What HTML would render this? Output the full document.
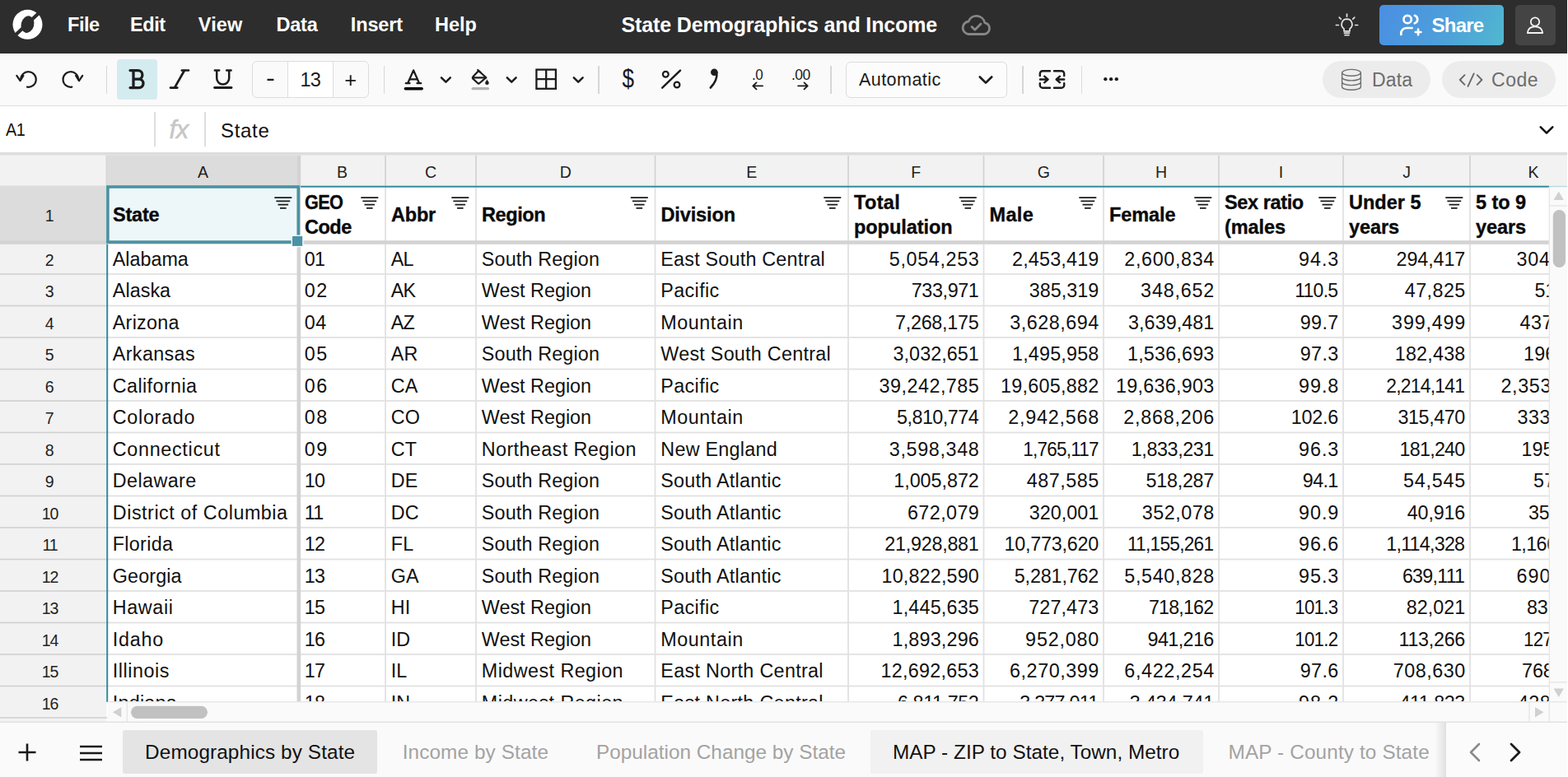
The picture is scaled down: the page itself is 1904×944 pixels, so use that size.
<!DOCTYPE html>
<html lang="en"><head><meta charset="utf-8"><title>State Demographics and Income</title>
<style>
*{box-sizing:border-box;margin:0;padding:0}
html,body{width:1904px;height:944px;overflow:hidden;background:#fff;font-family:"Liberation Sans",sans-serif;color:#111}
.abs{position:absolute}
#top{position:absolute;left:0;top:0;width:1903px;height:64.5px;background:#2d2d2d;z-index:3}
#tb{position:absolute;left:0;top:64px;width:1904px;height:65px;background:#fafafa;border-bottom:1.3px solid #dedede}
#fb{position:absolute;left:0;top:129px;width:1904px;height:56px;background:#fff}
#grid{position:absolute;left:0;top:185px;width:1904px;height:693px;background:#fff;overflow:hidden}
#bot{position:absolute;left:0;top:878px;width:1904px;height:66px;background:#fafafa}
.menu{position:absolute;top:0;height:64px;line-height:61.4px;color:#fff;font-weight:bold;font-size:23.5px;white-space:nowrap}
.sep{position:absolute;width:1.4px;background:#d6d6d6}
.t{position:absolute;white-space:nowrap}
.ic{position:absolute;overflow:visible}
.cell{position:absolute;white-space:nowrap;font-size:23.3px;height:38px;line-height:38px;color:#111}
.r{text-align:right}
.hd{position:absolute;white-space:nowrap;font-weight:bold;font-size:23.5px;color:#0a0a0a;-webkit-text-stroke:.35px #0a0a0a}
.ch{position:absolute;top:4px;height:37px;line-height:41px;text-align:center;font-size:19.5px;color:#222}
.rh{position:absolute;left:0;width:120px;text-align:center;font-size:19.5px;color:#222;letter-spacing:-.3px}
.vl{position:absolute;width:2px;background:#e3e3e3}
.hl{position:absolute;height:2px;background:#e3e3e3}
.tab{position:absolute;top:0;height:66px;line-height:71px;font-size:24.3px;white-space:nowrap}
</style></head>
<body>
<div id="top"><svg class="ic" style="left:0px;top:0px" width="64" height="64" viewBox="0 0 64 64">
<circle cx="33.5" cy="29.8" r="18" fill="#fff"/>
<ellipse cx="33.5" cy="29.6" rx="7.8" ry="10.4" fill="#2d2d2d" transform="rotate(14 33.5 29.6)"/>
<path d="M17.8 43.6 L48.6 14.4" stroke="#2d2d2d" stroke-width="4.2" fill="none"/>
</svg>
<div class="menu" style="left:82px;letter-spacing:-0.45px">File</div>
<div class="menu" style="left:158px;letter-spacing:-0.45px">Edit</div>
<div class="menu" style="left:240.8px;letter-spacing:0.1px">View</div>
<div class="menu" style="left:335.4px;letter-spacing:-0.2px">Data</div>
<div class="menu" style="left:425.8px;letter-spacing:-0.15px">Insert</div>
<div class="menu" style="left:528px;letter-spacing:0px">Help</div>
<div class="menu" style="left:754.5px;font-size:25px;letter-spacing:-.14px">State Demographics and Income</div>
<svg class="ic" style="left:1166px;top:15px" width="38" height="30" viewBox="0 0 38 30" fill="none" stroke="#868686" stroke-width="2.8" stroke-linecap="round" stroke-linejoin="round">
<path d="M10 26.5 H28.5 a7 7 0 0 0 1.2 -13.9 a10.2 10.2 0 0 0 -19.6 -1.6 a7.8 7.8 0 0 0 -0.1 15.5 z"/>
<path d="M14 17.5 l3.8 3.8 l7.2 -7.4"/>
</svg>
<svg class="ic" style="left:1620.3px;top:14.6px" width="31" height="31" viewBox="0 0 32 32" fill="none" stroke="#e2e2e2" stroke-width="1.8" stroke-linecap="round">
<path d="M16 8.5 a6.6 6.6 0 0 0 -3.6 12.1 v3 h7.2 v-3 a6.6 6.6 0 0 0 -3.6 -12.1 z" stroke-linejoin="round"/>
<path d="M12.8 26 h6.4 M13.5 28.6 h5"/>
<path d="M16 2.2 v3 M6.4 6.4 l2.1 2.1 M25.6 6.4 l-2.1 2.1 M2.5 16 h3 M26.5 16 h3"/>
</svg>
<div class="abs" style="left:1675px;top:6px;width:151px;height:49px;border-radius:5px;background:linear-gradient(115deg,#4a8fe2 0%,#4d9edb 50%,#51b8cf 100%)"></div>
<svg class="ic" style="left:1698px;top:16px" width="32" height="30" viewBox="0 0 32 30" fill="none" stroke="#fff" stroke-width="2.7" stroke-linecap="round" stroke-linejoin="round">
<circle cx="11.1" cy="7.5" r="4.7"/>
<path d="M3.300 26 v-1.500 a6.500 6.500 0 0 1 6.500 -6.500 h6.800"/>
<path d="M19.800 2.800 a5 5 0 0 1 0 9.500"/>
<path d="M24.100 19.700 v6.600 M20.800 23 h6.600"/>
</svg>
<div class="menu" style="left:1738.5px;font-size:24px;letter-spacing:-.75px">Share</div>
<div class="abs" style="left:1840px;top:6px;width:49px;height:49px;border-radius:5px;background:#444"></div>
<svg class="ic" style="left:1852px;top:18px" width="24" height="26" viewBox="0 0 24 26" fill="none" stroke="#f4f4f4" stroke-width="1.8" stroke-linejoin="round">
<circle cx="12" cy="8.5" r="5.2"/>
<path d="M2.8 22 c0.6 -5.600 4.400 -7.600 9.200 -7.600 s8.600 2 9.200 7.600 z"/>
</svg></div>
<div id="tb"><svg class="ic" style="left:0;top:0" width="1904" height="64" viewBox="0 64 1904 64" fill="none" stroke="#1c1c1c" stroke-width="2.2" stroke-linecap="round" stroke-linejoin="round"><path d="M25.2 96.6 A9.3 9.3 0 1 1 33 105.700"/><path d="M20.300 91.800 L24.500 98.200 L28.400 92"/></svg>
<svg class="ic" style="left:0;top:0" width="1904" height="64" viewBox="0 64 1904 64" fill="none" stroke="#1c1c1c" stroke-width="2.2" stroke-linecap="round" stroke-linejoin="round"><path d="M95.100 96.600 A9.300 9.300 0 1 0 87.300 105.700"/><path d="M100.200 91.800 L96 98.200 L92.100 92"/></svg>
<div class="sep" style="left:129px;top:15.500px;height:34px"></div>
<div class="abs" style="left:142px;top:8px;width:49px;height:49px;border-radius:4px;background:#d4ecf0"></div>
<svg class="ic" style="left:0;top:0" width="1904" height="64" viewBox="0 64 1904 64" fill="none" stroke="#1c1c1c" stroke-width="2.2" stroke-linecap="round" stroke-linejoin="round"><path d="M158 85.600 H167.600 a5.200 5.200 0 0 1 0 10.600 H162 M167.600 96.200 H168.800 a5.200 5.200 0 0 1 0 10.400 H158 M162 85.600 V106.600" stroke-width="3.250"/></svg>
<svg class="ic" style="left:0;top:0" width="1904" height="64" viewBox="0 64 1904 64" fill="none" stroke="#1c1c1c" stroke-width="2.2" stroke-linecap="round" stroke-linejoin="round"><path d="M220.800 85.500 H229 M207 106.600 H215.300 M224 85.500 L212 106.600" stroke-width="2.700"/></svg>
<svg class="ic" style="left:0;top:0" width="1904" height="64" viewBox="0 64 1904 64" fill="none" stroke="#1c1c1c" stroke-width="2.2" stroke-linecap="round" stroke-linejoin="round"><path d="M263.200 85.500 V95 a7.500 7.500 0 0 0 15 0 V85.500 M260.800 85.500 H266.200 M275.200 85.500 H280.600" stroke-width="2.500"/><path d="M260.600 106.500 H281" stroke-width="2.900"/></svg>
<div class="abs" style="left:306px;top:10px;width:142px;height:45px;border:1.3px solid #dddddd;border-radius:6px;background:#fafafa"></div>
<div class="abs" style="left:348.800px;top:11px;width:56.400px;height:43px;background:#fff;border-left:1.3px solid #dddddd;border-right:1.3px solid #dddddd"></div>
<div class="t" style="left:323px;top:13px;font-size:29px;line-height:36px;color:#1a1a1a;transform:scaleX(1.12);transform-origin:0 50%">-</div>
<div class="t" style="left:364.500px;top:14.500px;font-size:23.500px;line-height:36px;color:#1a1a1a;letter-spacing:-.9px">13</div>
<div class="t" style="left:418.200px;top:14.800px;font-size:25.500px;line-height:36px;color:#1a1a1a">+</div>
<div class="sep" style="left:466px;top:15.500px;height:34px"></div>
<svg class="ic" style="left:0;top:0" width="1904" height="64" viewBox="0 64 1904 64" fill="none" stroke="#1c1c1c" stroke-width="2.2" stroke-linecap="round" stroke-linejoin="round"><path d="M495.200 101 L502.100 85.400 L509 101 M497.500 96.300 H506.700 M492.800 101.200 H497.500 M506.500 101.200 H511.200" stroke-width="2.300"/><path d="M492.300 107.700 H512.200" stroke="#000" stroke-width="3.400"/></svg>
<svg class="ic" style="left:0;top:0" width="1904" height="64" viewBox="0 64 1904 64" fill="none" stroke="#1c1c1c" stroke-width="2.2" stroke-linecap="round" stroke-linejoin="round"><path d="M536.0 94.300 L541.4 99.700 L546.8 94.300" stroke-width="2.500"/></svg>
<svg class="ic" style="left:0;top:0" width="1904" height="64" viewBox="0 64 1904 64" fill="none" stroke="#1c1c1c" stroke-width="2.2" stroke-linecap="round" stroke-linejoin="round"><path d="M581.200 86 L590.300 94.200 L582.300 101 a1.600 1.600 0 0 1 -2.200 0 L574.300 95.600 a1.600 1.600 0 0 1 0 -2.300 z" stroke-width="2.200"/><path d="M574.300 94.400 H590"/><path d="M580.200 85 L583.500 88"/><path d="M591.400 97.200 c1.300 1.700 2 2.700 2 3.600 a2 2 0 0 1 -4 0 c0 -0.900 0.700 -1.900 2 -3.600 z" fill="#1c1c1c" stroke-width="0.600"/><path d="M574 107.700 H592.500" stroke="#b3b3b3" stroke-width="3.200"/></svg>
<svg class="ic" style="left:0;top:0" width="1904" height="64" viewBox="0 64 1904 64" fill="none" stroke="#1c1c1c" stroke-width="2.2" stroke-linecap="round" stroke-linejoin="round"><path d="M615.8 94.300 L621.2 99.700 L626.6 94.300" stroke-width="2.500"/></svg>
<svg class="ic" style="left:0;top:0" width="1904" height="64" viewBox="0 64 1904 64" fill="none" stroke="#1c1c1c" stroke-width="2.300" stroke-linecap="round" stroke-linejoin="round"><rect x="651.400" y="84.600" width="23.500" height="23.200" stroke-linejoin="miter"/><path d="M663.200 84.600 V107.800 M651.400 96.200 H674.900" stroke-linecap="butt"/></svg>
<svg class="ic" style="left:0;top:0" width="1904" height="64" viewBox="0 64 1904 64" fill="none" stroke="#1c1c1c" stroke-width="2.2" stroke-linecap="round" stroke-linejoin="round"><path d="M696.8 94.300 L702.2 99.700 L707.6 94.300" stroke-width="2.500"/></svg>
<div class="sep" style="left:726.300px;top:15.500px;height:34px"></div>
<div class="t" style="left:754.100px;top:14.600px;font-size:31px;line-height:34px;color:#1a1a1a;transform:scaleX(.84);transform-origin:50% 50%">$</div>
<svg class="ic" style="left:0;top:0" width="1904" height="64" viewBox="0 64 1904 64" fill="none" stroke="#1c1c1c" stroke-width="2.2" stroke-linecap="round" stroke-linejoin="round"><path d="M804.200 106.700 L826 85.700" stroke-width="2.500"/><circle cx="808.300" cy="90.300" r="3.400"/><circle cx="822" cy="103" r="3.400"/></svg>
<svg class="ic" style="left:0;top:0" width="1904" height="64" viewBox="0 64 1904 64" fill="none" stroke="#1c1c1c" stroke-width="2.2" stroke-linecap="round" stroke-linejoin="round"><circle cx="867.300" cy="87.800" r="4.300" fill="#1c1c1c" stroke="none"/><path d="M870.300 88 c0.800 7 -2.200 13 -7.500 18.500" stroke-width="2.600"/></svg>
<div class="t" style="left:913.200px;top:17.400px;font-size:18px;line-height:20px;color:#1a1a1a;letter-spacing:-.6px;transform:scaleX(.94);transform-origin:0 0">.0</div>
<svg class="ic" style="left:0;top:0" width="1904" height="64" viewBox="0 64 1904 64" fill="none" stroke="#1c1c1c" stroke-width="2.2" stroke-linecap="round" stroke-linejoin="round"><path d="M926 104.400 H914.500 M918.500 100.400 L914.300 104.400 L918.500 108.400" stroke-width="1.900"/></svg>
<div class="t" style="left:961.400px;top:17.400px;font-size:18px;line-height:20px;color:#1a1a1a;letter-spacing:-.6px;transform:scaleX(.97);transform-origin:0 0">.00</div>
<svg class="ic" style="left:0;top:0" width="1904" height="64" viewBox="0 64 1904 64" fill="none" stroke="#1c1c1c" stroke-width="2.2" stroke-linecap="round" stroke-linejoin="round"><path d="M969.200 104.400 H980.500 M976.500 100.400 L980.700 104.400 L976.500 108.400" stroke-width="1.900"/></svg>
<div class="sep" style="left:1008.200px;top:15.500px;height:34px"></div>
<div class="abs" style="left:1027.300px;top:11.200px;width:195.600px;height:43.600px;border:1.3px solid #dddddd;border-radius:6px;background:#fcfcfc"></div>
<div class="t" style="left:1043px;top:15px;font-size:21.500px;line-height:36px;color:#1a1a1a;letter-spacing:.45px">Automatic</div>
<svg class="ic" style="left:0;top:0" width="1904" height="64" viewBox="0 64 1904 64" fill="none" stroke="#1c1c1c" stroke-width="2.2" stroke-linecap="round" stroke-linejoin="round"><path d="M1189.800 93.500 L1197 100.600 L1204.200 93.500" stroke-width="2.700"/></svg>
<div class="sep" style="left:1241.300px;top:15.500px;height:34px"></div>
<svg class="ic" style="left:0;top:0" width="1904" height="64" viewBox="0 64 1904 64" fill="none" stroke="#1c1c1c" stroke-width="2.400" stroke-linecap="round" stroke-linejoin="round"><path d="M1262.800 92 V89.400 a3.200 3.200 0 0 1 3.200 -3.200 H1275 M1280 86.200 H1289 a3.200 3.200 0 0 1 3.200 3.200 V92 M1262.800 101.300 V103.500 a3.200 3.200 0 0 0 3.200 3.200 H1275 M1280 106.700 H1289 a3.200 3.200 0 0 0 3.200 -3.200 V101.300"/>
<path d="M1263 96.500 H1272.300 M1268.200 92.700 L1272.500 96.500 L1268.200 100.300 M1292.200 96.500 H1282.900 M1287 92.700 L1282.700 96.500 L1287 100.300"/></svg>
<div class="sep" style="left:1312.800px;top:15.500px;height:34px;background:#dcdcdc;width:1px"></div>
<svg class="ic" style="left:0;top:0" width="1904" height="64" viewBox="0 64 1904 64" fill="none" stroke="#1c1c1c" stroke-width="2.2" stroke-linecap="round" stroke-linejoin="round"><circle cx="1342.300" cy="96.200" r="2.150" fill="#1c1c1c" stroke="none"/><circle cx="1349.100" cy="96.200" r="2.150" fill="#1c1c1c" stroke="none"/><circle cx="1355.800" cy="96.200" r="2.150" fill="#1c1c1c" stroke="none"/></svg>
<div class="abs" style="left:1606px;top:10.200px;width:131px;height:44.600px;border-radius:23px;background:#ececec"></div>
<svg class="ic" style="left:0;top:0" width="1904" height="64" viewBox="0 64 1904 64" fill="none" stroke="#6e6e6e" stroke-width="1.400"><ellipse cx="1641" cy="88.300" rx="11.400" ry="3.900"/><path d="M1629.600 88.300 V105.400 c0 2.100 5.100 3.900 11.400 3.900 s11.400 -1.800 11.400 -3.900 V88.300"/><path d="M1629.600 94 c0 2.100 5.100 3.900 11.400 3.900 s11.400 -1.800 11.400 -3.900 M1629.600 99.700 c0 2.100 5.100 3.900 11.400 3.900 s11.400 -1.800 11.400 -3.900"/></svg>
<div class="t" style="left:1666px;top:14px;font-size:23px;line-height:38.600px;color:#6c6c6c;letter-spacing:.15px">Data</div>
<div class="abs" style="left:1751px;top:10.200px;width:138px;height:44.600px;border-radius:23px;background:#ececec"></div>
<svg class="ic" style="left:0;top:0" width="1904" height="64" viewBox="0 64 1904 64" fill="none" stroke="#686868" stroke-width="1.900" stroke-linecap="round" stroke-linejoin="round"><path d="M1778.500 91.200 L1772.800 97 L1778.500 102.800 M1793.700 91.200 L1799.400 97 L1793.700 102.800 M1789.700 89.400 L1782.500 104.800"/></svg>
<div class="t" style="left:1811px;top:14px;font-size:23px;line-height:38.600px;color:#6c6c6c;letter-spacing:.55px">Code</div></div>
<div id="fb"><div class="t" style="left:6.5px;top:10.5px;font-size:22px;line-height:36px;color:#111;letter-spacing:-.4px;transform:scaleX(.9);transform-origin:0 50%">A1</div>
<div class="sep" style="left:187.300px;top:7px;height:42px;background:#dedede;width:1.8px"></div>
<div class="t" style="left:205.500px;top:10.500px;font-size:31px;line-height:36px;color:#c6c6c6;font-style:italic;letter-spacing:-.3px;-webkit-text-stroke:.5px #c6c6c6">fx</div>
<div class="sep" style="left:248.300px;top:7px;height:42px;background:#dedede;width:1.8px"></div>
<div class="t" style="left:268px;top:12.300px;font-size:24px;line-height:36px;color:#111;letter-spacing:.7px">State</div>
<svg class="ic" style="left:1868px;top:22px" width="20" height="14" viewBox="0 0 20 14" fill="none" stroke="#111" stroke-width="2.500" stroke-linecap="round" stroke-linejoin="round"><path d="M2.700 3.300 L10 10.600 L17.300 3.300"/></svg></div>
<div id="grid"><svg class="ic" style="left:0;top:0" width="1904" height="693" viewBox="0 185 1904 693"><rect x="0.00" y="184.80" width="1903.00" height="4.00" fill="#dddddd"/><rect x="0.00" y="188.70" width="1903.00" height="36.90" fill="#f2f2f2"/><rect x="129.60" y="188.70" width="231.00" height="36.90" fill="#dcdcdc"/><rect x="0.00" y="225.50" width="129.30" height="653.00" fill="#f2f2f2"/><rect x="0.00" y="225.50" width="129.30" height="67.00" fill="#dcdcdc"/><rect x="128.60" y="188.70" width="1.20" height="36.90" fill="#d2d2d2"/><rect x="467.20" y="189.00" width="1.60" height="36.50" fill="#d0d0d0"/><rect x="577.20" y="189.00" width="1.60" height="36.50" fill="#d0d0d0"/><rect x="794.70" y="189.00" width="1.60" height="36.50" fill="#d0d0d0"/><rect x="1029.20" y="189.00" width="1.60" height="36.50" fill="#d0d0d0"/><rect x="1193.70" y="189.00" width="1.60" height="36.50" fill="#d0d0d0"/><rect x="1339.20" y="189.00" width="1.60" height="36.50" fill="#d0d0d0"/><rect x="1479.20" y="189.00" width="1.60" height="36.50" fill="#d0d0d0"/><rect x="1630.20" y="189.00" width="1.60" height="36.50" fill="#d0d0d0"/><rect x="1784.20" y="189.00" width="1.60" height="36.50" fill="#d0d0d0"/><rect x="467.10" y="226.00" width="1.80" height="627.00" fill="#e1e1e1"/><rect x="577.10" y="226.00" width="1.80" height="627.00" fill="#e1e1e1"/><rect x="794.60" y="226.00" width="1.80" height="627.00" fill="#e1e1e1"/><rect x="1029.10" y="226.00" width="1.80" height="627.00" fill="#e1e1e1"/><rect x="1193.60" y="226.00" width="1.80" height="627.00" fill="#e1e1e1"/><rect x="1339.10" y="226.00" width="1.80" height="627.00" fill="#e1e1e1"/><rect x="1479.10" y="226.00" width="1.80" height="627.00" fill="#e1e1e1"/><rect x="1630.10" y="226.00" width="1.80" height="627.00" fill="#e1e1e1"/><rect x="1784.10" y="226.00" width="1.80" height="627.00" fill="#e1e1e1"/><rect x="129.00" y="332.10" width="1752.00" height="1.80" fill="#e1e1e1"/><rect x="0.00" y="332.20" width="129.30" height="1.60" fill="#d0d0d0"/><rect x="129.00" y="370.60" width="1752.00" height="1.80" fill="#e1e1e1"/><rect x="0.00" y="370.70" width="129.30" height="1.60" fill="#d0d0d0"/><rect x="129.00" y="409.10" width="1752.00" height="1.80" fill="#e1e1e1"/><rect x="0.00" y="409.20" width="129.30" height="1.60" fill="#d0d0d0"/><rect x="129.00" y="447.60" width="1752.00" height="1.80" fill="#e1e1e1"/><rect x="0.00" y="447.70" width="129.30" height="1.60" fill="#d0d0d0"/><rect x="129.00" y="486.10" width="1752.00" height="1.80" fill="#e1e1e1"/><rect x="0.00" y="486.20" width="129.30" height="1.60" fill="#d0d0d0"/><rect x="129.00" y="524.60" width="1752.00" height="1.80" fill="#e1e1e1"/><rect x="0.00" y="524.70" width="129.30" height="1.60" fill="#d0d0d0"/><rect x="129.00" y="563.10" width="1752.00" height="1.80" fill="#e1e1e1"/><rect x="0.00" y="563.20" width="129.30" height="1.60" fill="#d0d0d0"/><rect x="129.00" y="601.60" width="1752.00" height="1.80" fill="#e1e1e1"/><rect x="0.00" y="601.70" width="129.30" height="1.60" fill="#d0d0d0"/><rect x="129.00" y="640.10" width="1752.00" height="1.80" fill="#e1e1e1"/><rect x="0.00" y="640.20" width="129.30" height="1.60" fill="#d0d0d0"/><rect x="129.00" y="678.60" width="1752.00" height="1.80" fill="#e1e1e1"/><rect x="0.00" y="678.70" width="129.30" height="1.60" fill="#d0d0d0"/><rect x="129.00" y="717.10" width="1752.00" height="1.80" fill="#e1e1e1"/><rect x="0.00" y="717.20" width="129.30" height="1.60" fill="#d0d0d0"/><rect x="129.00" y="755.60" width="1752.00" height="1.80" fill="#e1e1e1"/><rect x="0.00" y="755.70" width="129.30" height="1.60" fill="#d0d0d0"/><rect x="129.00" y="794.10" width="1752.00" height="1.80" fill="#e1e1e1"/><rect x="0.00" y="794.20" width="129.30" height="1.60" fill="#d0d0d0"/><rect x="129.00" y="832.60" width="1752.00" height="1.80" fill="#e1e1e1"/><rect x="0.00" y="832.70" width="129.30" height="1.60" fill="#d0d0d0"/><rect x="129.00" y="871.10" width="1752.00" height="1.80" fill="#e1e1e1"/><rect x="0.00" y="871.20" width="129.30" height="1.60" fill="#d0d0d0"/><rect x="131.00" y="227.00" width="231.00" height="66.00" fill="#edf7f9"/></svg>
<div class="ch" style="left:130px;width:233px">A</div>
<div class="ch" style="left:363px;width:105px">B</div>
<div class="ch" style="left:468px;width:110px">C</div>
<div class="ch" style="left:578px;width:217.5px">D</div>
<div class="ch" style="left:795.5px;width:234.5px">E</div>
<div class="ch" style="left:1030px;width:164.5px">F</div>
<div class="ch" style="left:1194.5px;width:145.5px">G</div>
<div class="ch" style="left:1340px;width:140px">H</div>
<div class="ch" style="left:1480px;width:151px">I</div>
<div class="ch" style="left:1631px;width:154px">J</div>
<div class="ch" style="left:1785px;width:154px">K</div>
<div class="rh" style="top:42px;height:66px;line-height:70px">1</div>
<div class="rh" style="top:109.50px;height:38.5px;line-height:42.6px">2</div>
<div class="rh" style="top:148.00px;height:38.5px;line-height:42.6px">3</div>
<div class="rh" style="top:186.50px;height:38.5px;line-height:42.6px">4</div>
<div class="rh" style="top:225.00px;height:38.5px;line-height:42.6px">5</div>
<div class="rh" style="top:263.50px;height:38.5px;line-height:42.6px">6</div>
<div class="rh" style="top:302.00px;height:38.5px;line-height:42.6px">7</div>
<div class="rh" style="top:340.50px;height:38.5px;line-height:42.6px">8</div>
<div class="rh" style="top:379.00px;height:38.5px;line-height:42.6px">9</div>
<div class="rh" style="top:417.50px;height:38.5px;line-height:42.6px;letter-spacing:-1px;padding-left:1px">10</div>
<div class="rh" style="top:456.00px;height:38.5px;line-height:42.6px;letter-spacing:-1px;padding-left:1px">11</div>
<div class="rh" style="top:494.50px;height:38.5px;line-height:42.6px;letter-spacing:-1px;padding-left:1px">12</div>
<div class="rh" style="top:533.00px;height:38.5px;line-height:42.6px;letter-spacing:-1px;padding-left:1px">13</div>
<div class="rh" style="top:571.50px;height:38.5px;line-height:42.6px;letter-spacing:-1px;padding-left:1px">14</div>
<div class="rh" style="top:610.00px;height:38.5px;line-height:42.6px;letter-spacing:-1px;padding-left:1px">15</div>
<div class="rh" style="top:648.50px;height:38.5px;line-height:42.6px;letter-spacing:-1px;padding-left:1px">16</div>
<div class="rh" style="top:687.00px;height:38.5px;line-height:42.6px;letter-spacing:-1px;padding-left:1px">17</div>
<div class="hd" style="left:137px;top:60.5px;height:30px;line-height:30px;letter-spacing:-0.22px">State</div>
<div class="hd" style="left:370px;top:46px;height:30px;line-height:30px;letter-spacing:-0.75px;transform:scaleX(0.924);transform-origin:0 50%">GEO</div>
<div class="hd" style="left:370px;top:76.30000000000001px;height:30px;line-height:30px;letter-spacing:-0.49px">Code</div>
<div class="hd" style="left:475px;top:60.5px;height:30px;line-height:30px;letter-spacing:-0.19px">Abbr</div>
<div class="hd" style="left:585px;top:60.5px;height:30px;line-height:30px;letter-spacing:-0.42px">Region</div>
<div class="hd" style="left:802.5px;top:60.5px;height:30px;line-height:30px;letter-spacing:-0.12px">Division</div>
<div class="hd" style="left:1037px;top:46px;height:30px;line-height:30px;letter-spacing:0.33px">Total</div>
<div class="hd" style="left:1037px;top:76.30000000000001px;height:30px;line-height:30px;letter-spacing:-0.06px">population</div>
<div class="hd" style="left:1201.5px;top:60.5px;height:30px;line-height:30px;letter-spacing:0.34px">Male</div>
<div class="hd" style="left:1347px;top:60.5px;height:30px;line-height:30px;letter-spacing:-0.10px">Female</div>
<div class="hd" style="left:1487px;top:46px;height:30px;line-height:30px;letter-spacing:-0.39px">Sex ratio</div>
<div class="hd" style="left:1487px;top:76.30000000000001px;height:30px;line-height:30px;letter-spacing:-0.08px">(males</div>
<div class="hd" style="left:1638px;top:46px;height:30px;line-height:30px;letter-spacing:-0.00px">Under 5</div>
<div class="hd" style="left:1638px;top:76.30000000000001px;height:30px;line-height:30px;letter-spacing:-0.09px">years</div>
<div class="hd" style="left:1792px;top:46px;height:30px;line-height:30px;letter-spacing:-0.06px">5 to 9</div>
<div class="hd" style="left:1792px;top:76.30000000000001px;height:30px;line-height:30px;letter-spacing:-0.09px">years</div>
<div class="abs" style="left:0;top:0;width:1881px;height:667.6px;overflow:hidden">
<div class="cell" style="left:136.8px;top:111.00px;letter-spacing:0.00px">Alabama</div>
<div class="cell" style="left:369.8px;top:111.00px;letter-spacing:-0.75px">01</div>
<div class="cell" style="left:474.8px;top:111.00px;letter-spacing:-0.75px">AL</div>
<div class="cell" style="left:584.8px;top:111.00px;letter-spacing:0.18px">South Region</div>
<div class="cell" style="left:802.3px;top:111.00px;letter-spacing:0.23px">East South Central</div>
<div class="cell r" style="left:1030px;width:158.80px;top:111.00px;letter-spacing:0.66px;margin-left:0.66px">5,054,253</div>
<div class="cell r" style="left:1194.5px;width:139.80px;top:111.00px;letter-spacing:0.20px;margin-left:0.20px">2,453,419</div>
<div class="cell r" style="left:1340px;width:134.30px;top:111.00px;letter-spacing:0.66px;margin-left:0.66px">2,600,834</div>
<div class="cell r" style="left:1480px;width:145.30px;top:111.00px;letter-spacing:0.95px;margin-left:0.95px">94.3</div>
<div class="cell r" style="left:1631px;width:148.30px;top:111.00px;letter-spacing:-0.07px;margin-left:-0.07px">294,417</div>
<div class="cell" style="left:1841.5px;top:111.00px;letter-spacing:0.83px">304,668</div>
<div class="cell" style="left:136.8px;top:149.00px;letter-spacing:0.07px">Alaska</div>
<div class="cell" style="left:369.8px;top:149.00px;letter-spacing:1.50px">02</div>
<div class="cell" style="left:474.8px;top:149.00px;letter-spacing:-0.75px">AK</div>
<div class="cell" style="left:584.8px;top:149.00px;letter-spacing:0.03px">West Region</div>
<div class="cell" style="left:802.3px;top:149.00px;letter-spacing:0.39px">Pacific</div>
<div class="cell r" style="left:1030px;width:158.80px;top:149.00px;letter-spacing:-0.35px;margin-left:-0.35px">733,971</div>
<div class="cell r" style="left:1194.5px;width:139.80px;top:149.00px;letter-spacing:0.05px;margin-left:0.05px">385,319</div>
<div class="cell r" style="left:1340px;width:134.30px;top:149.00px;letter-spacing:0.83px;margin-left:0.83px">348,652</div>
<div class="cell r" style="left:1480px;width:145.30px;top:149.00px;letter-spacing:-0.75px;transform:scaleX(0.985);transform-origin:100% 50%;margin-left:-0.75px">110.5</div>
<div class="cell r" style="left:1631px;width:148.30px;top:149.00px;letter-spacing:0.45px;margin-left:0.45px">47,825</div>
<div class="cell" style="left:1863.5px;top:149.00px;letter-spacing:-0.15px">51,336</div>
<div class="cell" style="left:136.8px;top:188.00px;letter-spacing:0.28px">Arizona</div>
<div class="cell" style="left:369.8px;top:188.00px;letter-spacing:0.54px">04</div>
<div class="cell" style="left:474.8px;top:188.00px;letter-spacing:-0.75px">AZ</div>
<div class="cell" style="left:584.8px;top:188.00px;letter-spacing:0.03px">West Region</div>
<div class="cell" style="left:802.3px;top:188.00px;letter-spacing:0.57px">Mountain</div>
<div class="cell r" style="left:1030px;width:158.80px;top:188.00px;letter-spacing:-0.22px;margin-left:-0.22px">7,268,175</div>
<div class="cell r" style="left:1194.5px;width:139.80px;top:188.00px;letter-spacing:0.54px;margin-left:0.54px">3,628,694</div>
<div class="cell r" style="left:1340px;width:134.30px;top:188.00px;letter-spacing:0.08px;margin-left:0.08px">3,639,481</div>
<div class="cell r" style="left:1480px;width:145.30px;top:188.00px;letter-spacing:0.39px;margin-left:0.39px">99.7</div>
<div class="cell r" style="left:1631px;width:148.30px;top:188.00px;letter-spacing:0.83px;margin-left:0.83px">399,499</div>
<div class="cell" style="left:1845.5px;top:188.00px;letter-spacing:0.55px">437,505</div>
<div class="cell" style="left:136.8px;top:226.00px;letter-spacing:0.38px">Arkansas</div>
<div class="cell" style="left:369.8px;top:226.00px;letter-spacing:1.50px">05</div>
<div class="cell" style="left:474.8px;top:226.00px;letter-spacing:.1px">AR</div>
<div class="cell" style="left:584.8px;top:226.00px;letter-spacing:0.18px">South Region</div>
<div class="cell" style="left:802.3px;top:226.00px;letter-spacing:0.28px">West South Central</div>
<div class="cell r" style="left:1030px;width:158.80px;top:226.00px;letter-spacing:0.08px;margin-left:0.08px">3,032,651</div>
<div class="cell r" style="left:1194.5px;width:139.80px;top:226.00px;letter-spacing:0.20px;margin-left:0.20px">1,495,958</div>
<div class="cell r" style="left:1340px;width:134.30px;top:226.00px;letter-spacing:0.20px;margin-left:0.20px">1,536,693</div>
<div class="cell r" style="left:1480px;width:145.30px;top:226.00px;letter-spacing:0.39px;margin-left:0.39px">97.3</div>
<div class="cell r" style="left:1631px;width:148.30px;top:226.00px;letter-spacing:0.22px;margin-left:0.22px">182,438</div>
<div class="cell" style="left:1850px;top:226.00px;letter-spacing:0.22px">196,382</div>
<div class="cell" style="left:136.8px;top:265.00px;letter-spacing:0.42px">California</div>
<div class="cell" style="left:369.8px;top:265.00px;letter-spacing:1.50px">06</div>
<div class="cell" style="left:474.8px;top:265.00px;letter-spacing:.1px">CA</div>
<div class="cell" style="left:584.8px;top:265.00px;letter-spacing:0.03px">West Region</div>
<div class="cell" style="left:802.3px;top:265.00px;letter-spacing:0.39px">Pacific</div>
<div class="cell r" style="left:1030px;width:158.80px;top:265.00px;letter-spacing:0.52px;margin-left:0.52px">39,242,785</div>
<div class="cell r" style="left:1194.5px;width:139.80px;top:265.00px;letter-spacing:0.30px;margin-left:0.30px">19,605,882</div>
<div class="cell r" style="left:1340px;width:134.30px;top:265.00px;letter-spacing:0.30px;margin-left:0.30px">19,636,903</div>
<div class="cell r" style="left:1480px;width:145.30px;top:265.00px;letter-spacing:0.95px;margin-left:0.95px">99.8</div>
<div class="cell r" style="left:1631px;width:148.30px;top:265.00px;letter-spacing:-0.75px;transform:scaleX(0.981);transform-origin:100% 50%;margin-left:-0.75px">2,214,141</div>
<div class="cell" style="left:1822.5px;top:265.00px;letter-spacing:0.66px">2,353,864</div>
<div class="cell" style="left:136.8px;top:303.00px;letter-spacing:0.72px">Colorado</div>
<div class="cell" style="left:369.8px;top:303.00px;letter-spacing:1.50px">08</div>
<div class="cell" style="left:474.8px;top:303.00px;letter-spacing:.1px">CO</div>
<div class="cell" style="left:584.8px;top:303.00px;letter-spacing:0.03px">West Region</div>
<div class="cell" style="left:802.3px;top:303.00px;letter-spacing:0.57px">Mountain</div>
<div class="cell r" style="left:1030px;width:158.80px;top:303.00px;letter-spacing:-0.47px;margin-left:-0.47px">5,810,774</div>
<div class="cell r" style="left:1194.5px;width:139.80px;top:303.00px;letter-spacing:0.79px;margin-left:0.79px">2,942,568</div>
<div class="cell r" style="left:1340px;width:134.30px;top:303.00px;letter-spacing:0.79px;margin-left:0.79px">2,868,206</div>
<div class="cell r" style="left:1480px;width:145.30px;top:303.00px;letter-spacing:-0.20px;margin-left:-0.20px">102.6</div>
<div class="cell r" style="left:1631px;width:148.30px;top:303.00px;letter-spacing:-0.40px;margin-left:-0.40px">315,470</div>
<div class="cell" style="left:1842.5px;top:303.00px;letter-spacing:0.55px">333,702</div>
<div class="cell" style="left:136.8px;top:342.00px;letter-spacing:0.71px">Connecticut</div>
<div class="cell" style="left:369.8px;top:342.00px;letter-spacing:1.50px">09</div>
<div class="cell" style="left:474.8px;top:342.00px;letter-spacing:.1px">CT</div>
<div class="cell" style="left:584.8px;top:342.00px;letter-spacing:0.42px">Northeast Region</div>
<div class="cell" style="left:802.3px;top:342.00px;letter-spacing:0.28px">New England</div>
<div class="cell r" style="left:1030px;width:158.80px;top:342.00px;letter-spacing:0.66px;margin-left:0.66px">3,598,348</div>
<div class="cell r" style="left:1194.5px;width:139.80px;top:342.00px;letter-spacing:-0.75px;transform:scaleX(0.963);transform-origin:100% 50%;margin-left:-0.75px">1,765,117</div>
<div class="cell r" style="left:1340px;width:134.30px;top:342.00px;letter-spacing:-0.39px;margin-left:-0.39px">1,833,231</div>
<div class="cell r" style="left:1480px;width:145.30px;top:342.00px;letter-spacing:0.95px;margin-left:0.95px">96.3</div>
<div class="cell r" style="left:1631px;width:148.30px;top:342.00px;letter-spacing:-0.73px;margin-left:-0.73px">181,240</div>
<div class="cell" style="left:1847.5px;top:342.00px;letter-spacing:0.05px">195,360</div>
<div class="cell" style="left:136.8px;top:380.00px;letter-spacing:0.42px">Delaware</div>
<div class="cell" style="left:369.8px;top:380.00px;letter-spacing:-0.75px">10</div>
<div class="cell" style="left:474.8px;top:380.00px;letter-spacing:.1px">DE</div>
<div class="cell" style="left:584.8px;top:380.00px;letter-spacing:0.18px">South Region</div>
<div class="cell" style="left:802.3px;top:380.00px;letter-spacing:0.28px">South Atlantic</div>
<div class="cell r" style="left:1030px;width:158.80px;top:380.00px;letter-spacing:-0.01px;margin-left:-0.01px">1,005,872</div>
<div class="cell r" style="left:1194.5px;width:139.80px;top:380.00px;letter-spacing:0.55px;margin-left:0.55px">487,585</div>
<div class="cell r" style="left:1340px;width:134.30px;top:380.00px;letter-spacing:-0.23px;margin-left:-0.23px">518,287</div>
<div class="cell r" style="left:1480px;width:145.30px;top:380.00px;letter-spacing:-0.61px;margin-left:-0.61px">94.1</div>
<div class="cell r" style="left:1631px;width:148.30px;top:380.00px;letter-spacing:0.79px;margin-left:0.79px">54,545</div>
<div class="cell" style="left:1862px;top:380.00px;letter-spacing:0.25px">57,264</div>
<div class="cell" style="left:136.8px;top:419.00px;letter-spacing:0.54px">District of Columbia</div>
<div class="cell" style="left:369.8px;top:419.00px;letter-spacing:-0.75px">11</div>
<div class="cell" style="left:474.8px;top:419.00px;letter-spacing:.1px">DC</div>
<div class="cell" style="left:584.8px;top:419.00px;letter-spacing:0.18px">South Region</div>
<div class="cell" style="left:802.3px;top:419.00px;letter-spacing:0.28px">South Atlantic</div>
<div class="cell r" style="left:1030px;width:158.80px;top:419.00px;letter-spacing:0.43px;margin-left:0.43px">672,079</div>
<div class="cell r" style="left:1194.5px;width:139.80px;top:419.00px;letter-spacing:0.05px;margin-left:0.05px">320,001</div>
<div class="cell r" style="left:1340px;width:134.30px;top:419.00px;letter-spacing:0.55px;margin-left:0.55px">352,078</div>
<div class="cell r" style="left:1480px;width:145.30px;top:419.00px;letter-spacing:0.95px;margin-left:0.95px">90.9</div>
<div class="cell r" style="left:1631px;width:148.30px;top:419.00px;letter-spacing:-0.15px;margin-left:-0.15px">40,916</div>
<div class="cell" style="left:1856px;top:419.00px;letter-spacing:-0.15px">35,105</div>
<div class="cell" style="left:136.8px;top:457.00px;letter-spacing:0.31px">Florida</div>
<div class="cell" style="left:369.8px;top:457.00px;letter-spacing:-0.75px">12</div>
<div class="cell" style="left:474.8px;top:457.00px;letter-spacing:.1px">FL</div>
<div class="cell" style="left:584.8px;top:457.00px;letter-spacing:0.18px">South Region</div>
<div class="cell" style="left:802.3px;top:457.00px;letter-spacing:0.28px">South Atlantic</div>
<div class="cell r" style="left:1030px;width:158.80px;top:457.00px;letter-spacing:-0.23px;margin-left:-0.23px">21,928,881</div>
<div class="cell r" style="left:1194.5px;width:139.80px;top:457.00px;letter-spacing:-0.19px;margin-left:-0.19px">10,773,620</div>
<div class="cell r" style="left:1340px;width:134.30px;top:457.00px;letter-spacing:-0.75px;transform:scaleX(0.972);transform-origin:100% 50%;margin-left:-0.75px">11,155,261</div>
<div class="cell r" style="left:1480px;width:145.30px;top:457.00px;letter-spacing:0.95px;margin-left:0.95px">96.6</div>
<div class="cell r" style="left:1631px;width:148.30px;top:457.00px;letter-spacing:-0.75px;transform:scaleX(0.999);transform-origin:100% 50%;margin-left:-0.75px">1,114,328</div>
<div class="cell" style="left:1835px;top:457.00px;letter-spacing:-0.60px">1,166,927</div>
<div class="cell" style="left:136.8px;top:496.00px;letter-spacing:0.15px">Georgia</div>
<div class="cell" style="left:369.8px;top:496.00px;letter-spacing:-0.75px">13</div>
<div class="cell" style="left:474.8px;top:496.00px;letter-spacing:.1px">GA</div>
<div class="cell" style="left:584.8px;top:496.00px;letter-spacing:0.18px">South Region</div>
<div class="cell" style="left:802.3px;top:496.00px;letter-spacing:0.28px">South Atlantic</div>
<div class="cell r" style="left:1030px;width:158.80px;top:496.00px;letter-spacing:0.18px;margin-left:0.18px">10,822,590</div>
<div class="cell r" style="left:1194.5px;width:139.80px;top:496.00px;letter-spacing:-0.14px;margin-left:-0.14px">5,281,762</div>
<div class="cell r" style="left:1340px;width:134.30px;top:496.00px;letter-spacing:0.66px;margin-left:0.66px">5,540,828</div>
<div class="cell r" style="left:1480px;width:145.30px;top:496.00px;letter-spacing:0.95px;margin-left:0.95px">95.3</div>
<div class="cell r" style="left:1631px;width:148.30px;top:496.00px;letter-spacing:-0.75px;transform:scaleX(0.998);transform-origin:100% 50%;margin-left:-0.75px">639,111</div>
<div class="cell" style="left:1841.5px;top:496.00px;letter-spacing:1.00px">690,542</div>
<div class="cell" style="left:136.8px;top:534.00px;letter-spacing:0.63px">Hawaii</div>
<div class="cell" style="left:369.8px;top:534.00px;letter-spacing:-0.75px">15</div>
<div class="cell" style="left:474.8px;top:534.00px;letter-spacing:.1px">HI</div>
<div class="cell" style="left:584.8px;top:534.00px;letter-spacing:0.03px">West Region</div>
<div class="cell" style="left:802.3px;top:534.00px;letter-spacing:0.39px">Pacific</div>
<div class="cell r" style="left:1030px;width:158.80px;top:534.00px;letter-spacing:0.20px;margin-left:0.20px">1,445,635</div>
<div class="cell r" style="left:1194.5px;width:139.80px;top:534.00px;letter-spacing:0.15px;margin-left:0.15px">727,473</div>
<div class="cell r" style="left:1340px;width:134.30px;top:534.00px;letter-spacing:-0.75px;transform:scaleX(0.992);transform-origin:100% 50%;margin-left:-0.75px">718,162</div>
<div class="cell r" style="left:1480px;width:145.30px;top:534.00px;letter-spacing:-0.75px;transform:scaleX(0.953);transform-origin:100% 50%;margin-left:-0.75px">101.3</div>
<div class="cell r" style="left:1631px;width:148.30px;top:534.00px;letter-spacing:0.05px;margin-left:0.05px">82,021</div>
<div class="cell" style="left:1854px;top:534.00px;letter-spacing:-0.15px">83,310</div>
<div class="cell" style="left:136.8px;top:573.00px;letter-spacing:0.79px">Idaho</div>
<div class="cell" style="left:369.8px;top:573.00px;letter-spacing:-0.75px">16</div>
<div class="cell" style="left:474.8px;top:573.00px;letter-spacing:.1px">ID</div>
<div class="cell" style="left:584.8px;top:573.00px;letter-spacing:0.03px">West Region</div>
<div class="cell" style="left:802.3px;top:573.00px;letter-spacing:0.57px">Mountain</div>
<div class="cell r" style="left:1030px;width:158.80px;top:573.00px;letter-spacing:0.20px;margin-left:0.20px">1,893,296</div>
<div class="cell r" style="left:1194.5px;width:139.80px;top:573.00px;letter-spacing:0.83px;margin-left:0.83px">952,080</div>
<div class="cell r" style="left:1340px;width:134.30px;top:573.00px;letter-spacing:-0.57px;margin-left:-0.57px">941,216</div>
<div class="cell r" style="left:1480px;width:145.30px;top:573.00px;letter-spacing:-0.75px;transform:scaleX(0.953);transform-origin:100% 50%;margin-left:-0.75px">101.2</div>
<div class="cell r" style="left:1631px;width:148.30px;top:573.00px;letter-spacing:-0.28px;margin-left:-0.28px">113,266</div>
<div class="cell" style="left:1850px;top:573.00px;letter-spacing:-0.75px;transform:scaleX(0.953);transform-origin:0 50%">127,118</div>
<div class="cell" style="left:136.8px;top:611.00px;letter-spacing:0.54px">Illinois</div>
<div class="cell" style="left:369.8px;top:611.00px;letter-spacing:-0.75px">17</div>
<div class="cell" style="left:474.8px;top:611.00px;letter-spacing:.1px">IL</div>
<div class="cell" style="left:584.8px;top:611.00px;letter-spacing:0.46px">Midwest Region</div>
<div class="cell" style="left:802.3px;top:611.00px;letter-spacing:0.33px">East North Central</div>
<div class="cell r" style="left:1030px;width:158.80px;top:611.00px;letter-spacing:0.30px;margin-left:0.30px">12,692,653</div>
<div class="cell r" style="left:1194.5px;width:139.80px;top:611.00px;letter-spacing:0.58px;margin-left:0.58px">6,270,399</div>
<div class="cell r" style="left:1340px;width:134.30px;top:611.00px;letter-spacing:0.66px;margin-left:0.66px">6,422,254</div>
<div class="cell r" style="left:1480px;width:145.30px;top:611.00px;letter-spacing:0.39px;margin-left:0.39px">97.6</div>
<div class="cell r" style="left:1631px;width:148.30px;top:611.00px;letter-spacing:0.55px;margin-left:0.55px">708,630</div>
<div class="cell" style="left:1848px;top:611.00px;letter-spacing:-0.07px">768,321</div>
<div class="cell" style="left:136.8px;top:650.00px;letter-spacing:0.25px">Indiana</div>
<div class="cell" style="left:369.8px;top:650.00px;letter-spacing:-0.75px">18</div>
<div class="cell" style="left:474.8px;top:650.00px;letter-spacing:.1px">IN</div>
<div class="cell" style="left:584.8px;top:650.00px;letter-spacing:0.46px">Midwest Region</div>
<div class="cell" style="left:802.3px;top:650.00px;letter-spacing:0.33px">East North Central</div>
<div class="cell r" style="left:1030px;width:158.80px;top:650.00px;letter-spacing:-0.38px;margin-left:-0.38px">6,811,752</div>
<div class="cell r" style="left:1194.5px;width:139.80px;top:650.00px;letter-spacing:-0.72px;margin-left:-0.72px">3,377,011</div>
<div class="cell r" style="left:1340px;width:134.30px;top:650.00px;letter-spacing:-0.14px;margin-left:-0.14px">3,434,741</div>
<div class="cell r" style="left:1480px;width:145.30px;top:650.00px;letter-spacing:0.95px;margin-left:0.95px">98.2</div>
<div class="cell r" style="left:1631px;width:148.30px;top:650.00px;letter-spacing:-0.45px;margin-left:-0.45px">411,823</div>
<div class="cell" style="left:1843px;top:650.00px;letter-spacing:0.38px">428,790</div>
</div>
<svg class="ic" style="left:0;top:0" width="1904" height="693" viewBox="0 185 1904 693"><path d="M333.3 240.1 h21 M335.4 244.3 h16.8 M337.5 248.6 h12.6 M340.0 252.8 h7.6" stroke="#1a1a1a" stroke-width="1.7" fill="none"/><path d="M438.3 240.1 h21 M440.4 244.3 h16.8 M442.5 248.6 h12.6 M445.0 252.8 h7.6" stroke="#1a1a1a" stroke-width="1.7" fill="none"/><path d="M548.3 240.1 h21 M550.4 244.3 h16.8 M552.5 248.6 h12.6 M555.0 252.8 h7.6" stroke="#1a1a1a" stroke-width="1.7" fill="none"/><path d="M765.8 240.1 h21 M767.9 244.3 h16.8 M770.0 248.6 h12.6 M772.5 252.8 h7.6" stroke="#1a1a1a" stroke-width="1.7" fill="none"/><path d="M1000.3 240.1 h21 M1002.4 244.3 h16.8 M1004.5 248.6 h12.6 M1007.0 252.8 h7.6" stroke="#1a1a1a" stroke-width="1.7" fill="none"/><path d="M1164.8 240.1 h21 M1166.9 244.3 h16.8 M1169.0 248.6 h12.6 M1171.5 252.8 h7.6" stroke="#1a1a1a" stroke-width="1.7" fill="none"/><path d="M1310.3 240.1 h21 M1312.4 244.3 h16.8 M1314.5 248.6 h12.6 M1317.0 252.8 h7.6" stroke="#1a1a1a" stroke-width="1.7" fill="none"/><path d="M1450.3 240.1 h21 M1452.4 244.3 h16.8 M1454.5 248.6 h12.6 M1457.0 252.8 h7.6" stroke="#1a1a1a" stroke-width="1.7" fill="none"/><path d="M1601.3 240.1 h21 M1603.4 244.3 h16.8 M1605.5 248.6 h12.6 M1608.0 252.8 h7.6" stroke="#1a1a1a" stroke-width="1.7" fill="none"/><path d="M1755.3 240.1 h21 M1757.4 244.3 h16.8 M1759.5 248.6 h12.6 M1762.0 252.8 h7.6" stroke="#1a1a1a" stroke-width="1.7" fill="none"/><rect x="363.00" y="225.70" width="1518.00" height="2.00" fill="#318a9c"/><rect x="129.20" y="295.00" width="2.00" height="558.00" fill="#318a9c"/><rect x="0.00" y="292.20" width="1881.00" height="4.60" fill="#d3d3d3"/><rect x="360.50" y="188.70" width="4.70" height="664.30" fill="#d3d3d3"/><rect x="130.9" y="227.0" width="231.4" height="67.10000000000001" fill="none" stroke="#4a92a3" stroke-width="3.6"/><rect x="353.70" y="285.60" width="14.80" height="14.60" fill="#ffffff"/><rect x="355.00" y="286.90" width="12.20" height="12.00" fill="#4a92a3"/><rect x="1881.30" y="227.00" width="21.70" height="626.00" fill="#fafafa"/><rect x="1881.00" y="225.80" width="22.00" height="1.40" fill="#b9d6db"/><rect x="1880.60" y="227.00" width="1.40" height="626.00" fill="#e6e6e6"/><rect x="1881.30" y="249.30" width="21.70" height="1.40" fill="#e6e6e6"/><rect x="1881.30" y="828.20" width="21.70" height="1.40" fill="#e6e6e6"/><path d="M1892.7 232.5 L1898.8 243 H1886.6 z" fill="#d0d0d0"/><path d="M1892.7 847 L1898.8 836.500 H1886.6 z" fill="#d0d0d0"/><rect x="1885.8" y="255" width="15.2" height="70" rx="7.6" fill="#c1c1c1"/><rect x="130.60" y="852.60" width="1772.00" height="25.40" fill="#fafafa"/><rect x="130.60" y="852.00" width="1772.00" height="1.40" fill="#e6e6e6"/><rect x="0.00" y="876.60" width="1903.00" height="1.60" fill="#e0e0e0"/><rect x="153.60" y="853.00" width="1.40" height="24.00" fill="#e6e6e6"/><rect x="1856.30" y="853.00" width="1.40" height="24.00" fill="#e6e6e6"/><rect x="1880.60" y="853.00" width="1.40" height="24.00" fill="#e6e6e6"/><path d="M136.800 865.300 L147.300 859.200 V871.400 z" fill="#d0d0d0"/><path d="M1874.500 865.300 L1864 859.200 V871.400 z" fill="#d0d0d0"/><rect x="159" y="857.700" width="93" height="15.200" rx="7.600" fill="#c1c1c1"/></svg></div>
<div id="bot"><svg class="ic" style="left:20px;top:23px" width="26" height="26" viewBox="0 0 26 26" fill="none" stroke="#1a1a1a" stroke-width="2.600"><path d="M13 2.500 v21 M2.500 13 h21"/></svg>
<svg class="ic" style="left:96px;top:26px" width="30" height="22" viewBox="0 0 30 22" fill="none" stroke="#1a1a1a" stroke-width="2.600"><path d="M1 3 h27 M1 11 h27 M1 19 h27"/></svg>
<div class="abs" style="left:149px;top:9px;width:308.500px;height:53px;border-radius:3px;background:#e4e4e4"></div>
<div class="abs" style="left:1057px;top:9px;width:404px;height:53px;border-radius:3px;background:#f1f1f1"></div>
<div class="tab" style="left:176.1px;color:#111;letter-spacing:0.12px">Demographics by State</div>
<div class="tab" style="left:488.7px;color:#a3a3a3;letter-spacing:0.12px">Income by State</div>
<div class="tab" style="left:724px;color:#a3a3a3;letter-spacing:0.02px">Population Change by State</div>
<div class="tab" style="left:1084px;color:#111;letter-spacing:0.04px">MAP - ZIP to State, Town, Metro</div>
<div class="tab" style="left:1491.6px;color:#a3a3a3;letter-spacing:0.14px">MAP - County to State</div>
<div class="abs" style="left:1742px;top:0;width:14px;height:66px;background:linear-gradient(90deg,rgba(0,0,0,0),rgba(0,0,0,.10))"></div>
<div class="abs" style="left:1756px;top:0;width:148px;height:66px;background:#fbfbfb"></div>
<svg class="ic" style="left:1782px;top:23px" width="18" height="26" viewBox="0 0 18 26" fill="none" stroke="#8a8a8a" stroke-width="2.600" stroke-linecap="round" stroke-linejoin="round"><path d="M14 3 L4 13 L14 23"/></svg>
<svg class="ic" style="left:1831px;top:23px" width="18" height="26" viewBox="0 0 18 26" fill="none" stroke="#1a1a1a" stroke-width="2.800" stroke-linecap="round" stroke-linejoin="round"><path d="M4 3 L14 13 L4 23"/></svg></div>
<div class="abs" style="left:1903px;top:0;width:1px;height:944px;background:#fff;z-index:9"></div>
</body></html>
